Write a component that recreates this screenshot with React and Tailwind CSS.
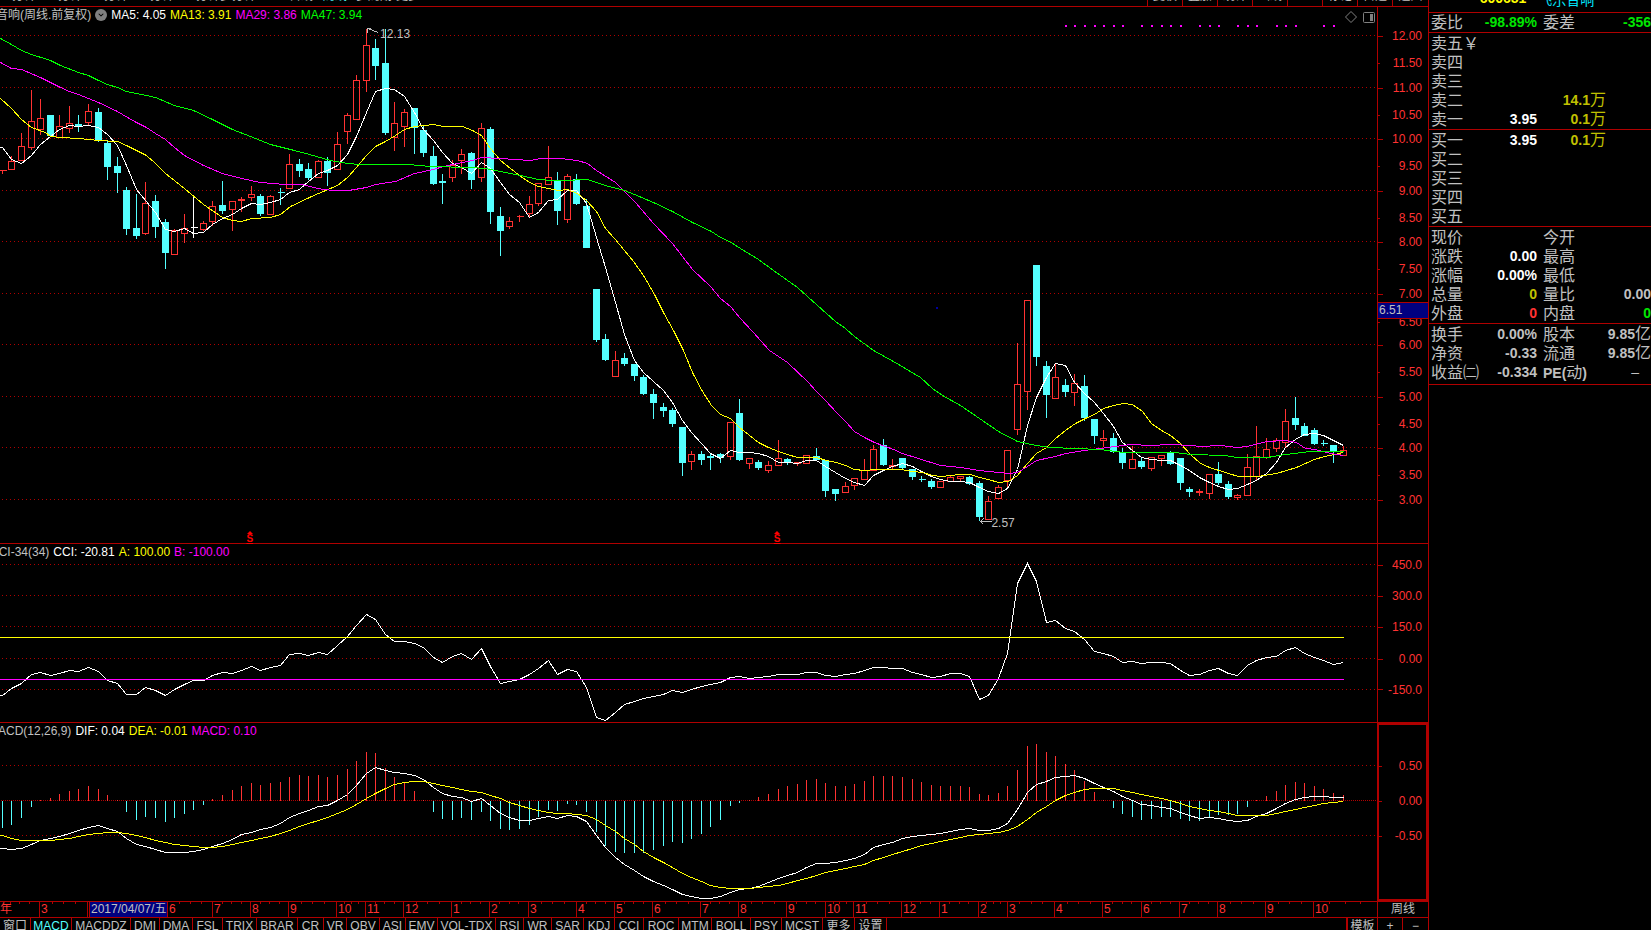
import { HiChevronDown } from "react-icons/hi";

// x of the n-th weekly bar on the 1377 wide canvas
const barX = (i) => Math.floor(2.3 + 9.577 * i);

const GRAY = "#c0c0c0";
const RED = "#ff3232";
const CYAN = "#54ffff";
const LINE = "#b00000";

// [up(1) / down(0) / flat(2), high, body top, body bottom, low]
const candles = [
    [1,170,170,170,173],[1,155,161,169,169],[1,132,146,160,160],[1,89,121,147,149],[1,98,118,129,134],
    [0,114,115,135,135],[1,114,126,137,137],[1,105,123,128,132],[0,114,124,126,131],[1,103,111,122,125],
    [0,107,112,140,141],[0,139,143,166,179],[0,156,166,172,192],[0,186,190,228,234],[0,193,228,235,238],
    [1,181,203,233,234],[0,194,201,226,237],[0,218,222,252,268],[1,228,230,254,254],[1,213,228,233,242],
    [2,194,227,227,237],[1,220,223,229,230],[1,200,206,221,225],[0,180,205,210,213],[1,201,201,209,230],
    [1,196,199,200,211],[1,185,194,197,200],[0,193,196,213,215],[1,194,196,214,214],[0,187,192,192,204],
    [1,153,164,188,188],[0,158,164,170,176],[0,162,169,177,179],[1,159,161,177,177],[0,156,161,172,185],
    [1,131,144,169,169],[1,112,115,131,143],[1,74,80,119,119],[1,28,45,80,91],[0,38,48,65,79],
    [0,28,63,132,134],[1,101,123,137,150],[1,108,112,126,146],[0,108,108,127,153],[0,125,130,152,156],
    [0,145,156,183,184],[0,173,181,182,203],[1,159,165,177,181],[1,148,154,160,173],[0,151,153,179,188],
    [1,122,128,177,181],[0,126,129,211,223],[0,206,216,230,255],[1,216,221,226,228],[1,214,216,216,221],
    [1,195,204,213,216],[1,183,183,203,205],[1,145,177,184,184],[0,171,180,210,224],[1,173,176,219,222],
    [0,173,179,203,204],[0,198,206,247,247],[0,289,289,339,341],[0,333,339,359,360],[1,350,360,376,376],
    [0,352,358,363,365],[0,364,364,375,380],[0,374,377,393,394],[0,388,394,402,418],[0,402,407,410,416],
    [0,407,410,423,426],[0,426,427,462,475],[1,450,454,461,469],[0,450,454,459,464],[0,452,456,457,469],
    [0,452,454,457,462],[1,422,422,456,459],[0,398,413,459,460],[1,458,458,463,468],[0,459,462,467,469],
    [1,460,465,470,472],[1,439,458,465,465],[0,457,459,462,464],[1,461,462,463,465],[1,455,455,463,463],
    [0,447,456,459,459],[0,459,460,490,496],[0,488,489,493,500],[1,481,486,492,492],[1,478,478,485,489],
    [1,458,470,479,479],[1,444,449,470,470],[0,438,445,464,465],[1,458,465,466,469],[0,457,458,467,469],
    [0,468,469,476,479],[0,475,479,479,481],[0,478,481,486,488],[1,481,481,487,487],[1,474,477,481,481],
    [1,475,476,478,480],[0,475,477,483,484],[0,480,483,516,520],[1,495,501,519,519],[1,484,487,498,498],
    [1,450,450,480,487],[1,342,384,429,434],[1,300,300,391,409],[0,265,265,356,365],[0,360,366,394,417],
    [1,362,377,398,398],[0,378,385,391,396],[1,373,383,392,405],[0,374,386,417,420],[0,419,419,435,443],
    [1,429,438,440,446],[0,432,438,451,452],[0,447,452,462,468],[1,445,459,468,468],[0,456,461,466,468],
    [1,456,457,468,470],[1,455,455,458,465],[0,450,452,463,464],[0,457,458,482,489],[0,486,489,491,496],
    [1,488,491,492,495],[1,474,474,493,498],[0,461,474,482,484],[0,480,484,496,498],[1,493,495,497,499],
    [1,453,467,495,495],[1,425,456,476,480],[1,437,449,457,458],[1,437,440,448,451],[1,408,421,442,446],
    [0,396,418,424,429],[0,422,426,435,435],[0,427,430,443,444],[0,439,443,443,445],[0,445,445,451,462],
    [1,445,450,455,455],
];

const ma5 = [
    147,159,163,155,144,136,129,125,126,125,127,134,145,165,189,200,212,229,231,228,233,232,224,218,214,208,203,204,
    202,199,192,189,181,173,170,165,154,136,112,91,88,89,96,112,129,140,152,163,167,173,162,168,182,194,202,217,212,
    200,199,190,190,203,237,267,302,334,360,372,381,390,402,420,432,443,453,458,450,452,452,453,456,462,462,463,460,
    460,466,472,478,482,485,475,470,466,463,466,471,476,479,481,481,482,487,491,493,488,469,425,397,377,363,365,382,
    393,402,413,426,442,450,457,459,460,460,465,470,477,482,486,489,488,484,480,473,462,447,439,434,433,435,440,445,
];

const ma13 =
    "0,98 11,108 21,119 31,127 45,132 50,136 60,137 78,138 98,140 117,141 126,145 146,155 155,163 165,173 184,188 203,204 222,217 232,220 241,221 251,218 270,217 280,214 290,206 309,197 318,193 337,185 347,177 356,167 366,155 375,146 385,141 395,135 404,129 414,126 433,124 443,126 462,126 472,130 481,135 490,148 500,160 510,168 519,175 529,182 538,186 548,188 558,190 567,189 577,193 586,200 596,211 605,228 614,238 624,250 633,261 643,275 654,294 663,312 673,330 683,350 692,372 702,391 711,405 720,414 730,418 739,427 758,442 768,447 778,451 787,454 797,457 816,457 826,460 836,462 845,465 854,469 864,470 875,469 900,469 912,471 922,472 932,475 941,476 950,475 960,474 970,474 979,477 988,479 998,482 1008,481 1017,475 1027,463 1036,453 1046,447 1055,438 1065,430 1075,423 1085,418 1094,414 1103,408 1113,405 1123,403 1132,404 1142,411 1151,423 1161,430 1170,435 1180,443 1190,454 1200,463 1209,467 1228,473 1238,476 1257,476 1276,473 1296,467 1314,459 1324,456 1334,454 1343,452";

const ma29 =
    "0,62 11,68 21,69 40,77 60,87 69,91 78,94 98,102 117,111 127,117 136,122 146,127 155,133 165,139 174,147 184,155 203,165 222,173 241,178 260,182 285,184 302,184 317,188 332,190 348,190 366,187 375,184 395,181 414,173 433,169 443,166 462,162 472,160 481,157 500,158 530,160 540,158 560,158 577,160 587,163 596,170 615,182 635,202 653,223 672,243 692,269 710,286 720,298 730,306 740,318 752,331 769,350 787,362 807,381 816,391 825,400 836,412 845,421 854,431 864,437 874,442 893,449 902,453 921,459 940,465 960,467 979,470 1008,473 1017,472 1027,466 1036,460 1055,456 1065,453 1084,450 1107,447 1130,444 1150,445 1170,444 1190,445 1200,446 1220,445 1237,447 1247,446 1266,441 1285,440 1296,442 1305,448 1315,449 1330,453 1343,455";

const ma47 =
    "0,38 11,44 21,50 31,54 50,60 60,65 78,72 88,75 98,80 107,84 117,87 126,91 146,95 155,97 174,105 193,110 212,119 232,129 250,136 270,144 290,149 309,154 330,160 347,163 360,164 408,164 430,166 470,167 485,168 500,171 520,175 538,179 552,180 570,180 580,179 587,179 605,185 624,190 634,194 653,202 672,211 692,222 711,231 720,237 729,241 740,248 758,259 773,270 797,287 817,305 835,321 845,328 854,336 873,350 893,361 920,377 932,388 942,395 960,405 979,418 998,431 1017,441 1036,445 1050,447 1075,448 1100,449 1123,452 1175,452 1190,454 1225,455 1236,457 1267,457 1285,454 1310,451 1343,451";

const cci = [
    695,688,683,674,672,675,673,670,671,667,671,680,683,694,694,687,690,695,689,684,680,680,675,672,673,670,666,670,
    667,665,654,653,655,652,654,645,636,625,614,619,634,641,641,643,647,657,662,656,653,659,648,666,683,681,679,674,
    668,660,674,669,671,687,717,720,712,704,701,698,696,694,690,692,689,686,684,682,677,676,678,677,676,674,674,674,
    672,672,675,676,674,673,670,667,667,668,668,672,674,677,676,673,673,676,699,695,678,653,583,563,581,622,620,628,
    631,639,651,653,656,662,661,663,662,662,663,670,675,674,670,668,673,675,665,660,657,656,650,647,653,657,660,664,
    662,
];

const macdBars = [
    827,824,817,806,799,797,793,790,788,785,788,794,799,811,819,816,817,821,817,813,809,804,798,794,789,785,782,784,
    782,781,776,774,775,774,776,774,768,760,751,752,767,776,782,790,799,811,818,819,817,819,811,820,828,829,828,824,
    816,809,810,803,804,811,831,845,851,852,852,852,849,845,841,842,838,833,826,819,805,802,799,796,793,788,785,783,
    779,778,782,785,785,783,780,775,775,775,776,778,781,784,785,785,785,786,793,794,792,785,769,745,743,751,755,763,
    769,780,791,799,807,813,816,819,818,816,816,818,820,820,816,814,814,813,806,799,795,790,784,781,782,785,788,792,
    794,
];

const dif = [
    848,849,848,844,840,838,836,833,830,827,825,828,831,838,844,846,849,852,852,852,851,849,846,843,839,834,832,829,
    827,823,817,813,810,806,805,800,794,785,773,767,770,772,773,775,779,787,793,796,797,801,798,805,813,817,820,820,
    818,816,818,815,816,821,835,847,857,864,870,876,881,885,889,894,896,898,898,896,892,889,888,886,882,878,875,872,
    867,863,863,862,860,858,854,847,844,842,838,836,835,834,833,831,829,828,830,830,828,823,809,792,784,781,777,776,
    775,778,783,787,791,796,800,804,805,807,808,812,815,818,817,818,820,821,820,816,813,808,803,799,797,796,796,797,
    797,
];

const dea = [
    835,838,840,840,840,840,839,838,836,834,833,832,832,833,835,837,840,842,844,845,846,847,847,846,844,842,840,838,
    836,833,830,826,823,820,817,813,809,804,798,793,788,784,782,781,781,783,785,787,789,791,792,795,798,802,805,808,
    810,812,813,813,814,815,819,825,831,838,844,851,857,862,867,873,877,881,885,887,888,888,888,887,886,885,883,880,
    878,875,872,870,868,866,864,860,857,854,851,848,845,843,841,839,837,835,834,833,832,830,826,819,812,806,800,795,
    792,789,788,788,788,790,792,794,796,798,800,803,806,808,810,811,813,815,815,815,815,813,811,809,807,805,803,802,
    801,
];

const signalDots = [111,112,113,114,115,116,117,119,120,121,122,123,125,126,127,129,130,131,133,134,135,138,139];

const periods = [
    { name: "1分钟", w: 36 },
    { name: "5分钟", w: 46 },
    { name: "15分钟", w: 46 },
    { name: "30分钟", w: 46 },
    { name: "60分钟", w: 46 },
    { name: "多分钟", w: 33 },
    { name: "日线", w: 60 },
    { name: "周线", w: 34, active: true },
    { name: "多周期", w: 45 },
    { name: "更多", w: 28 },
];

const tools = ["复权", "叠加", "统计", "画线", "F10", "标记", "自选"];

const months = [
    ["年", 39], ["3", 48], ["2017/04/07/五", 80], ["6", 45], ["7", 38], ["8", 38], ["9", 48], ["10", 29], ["11", 38],
    ["12", 48], ["1", 38], ["2", 39], ["3", 48], ["4", 38], ["5", 38], ["6", 48], ["7", 38], ["8", 48], ["9", 39],
    ["10", 28], ["11", 48], ["12", 38], ["1", 39], ["2", 29], ["3", 47], ["4", 48], ["5", 39], ["6", 38], ["7", 38],
    ["8", 48], ["9", 48], ["10", 63],
];

const indicators = [
    ["窗口", 31], ["MACD", 41], ["MACDDZ", 59], ["DMI", 29], ["DMA", 33], ["FSL", 30], ["TRIX", 34], ["BRAR", 41],
    ["CR", 26], ["VR", 23], ["OBV", 33], ["ASI", 26], ["EMV", 32], ["VOL-TDX", 58], ["RSI", 28], ["WR", 28],
    ["SAR", 32], ["KDJ", 31], ["CCI", 29], ["ROC", 35], ["MTM", 33], ["BOLL", 39], ["PSY", 31], ["MCST", 41],
    ["更多", 32], ["设置", 32],
];

const line = (ys) => `-1,${ys[0]} ` + ys.map((y, i) => `${barX(i)},${y}`).join(" ");

function Canvas({ top, height, children }) {
    return (
        <svg className="block w-full h-full" viewBox={`0 ${top} 1377 ${height}`} preserveAspectRatio="none" shapeRendering="crispEdges" fill="none">
            <g transform="translate(0.5 0.5)">{children}</g>
        </svg>
    );
}

function GridLines({ ys }) {
    return ys.map((y) => (
        <path key={y} d={`M1.5 ${y}H1376`} stroke={LINE} strokeDasharray="1 3" />
    ));
}

function Axis({ top, height, ticks, minor = [], boxed = false, children }) {
    return (
        <div className={boxed ? "relative w-[51px] shrink-0 border-2 border-[#b00000] overflow-hidden" : "relative w-[51px] shrink-0 border-l border-[#b00000] overflow-hidden"}>
            <div className={boxed ? "absolute -inset-0.5" : "absolute inset-0"}>
                {ticks.map(([label, y]) => (
                    <div key={label} className="absolute inset-x-0 h-0 flex items-center" style={{ top: `${((y - top + 1) / height) * 100}%` }}>
                        <span className={minor.includes(label) ? "w-0.5 h-px bg-[#b00000]" : "w-[5px] h-px bg-[#b00000]"}></span>
                        <span className="ml-auto pr-1.5 text-[12px] leading-[12px] text-[#ff3232]">{label}</span>
                    </div>
                ))}
                {children}
            </div>
        </div>
    );
}

function Legend({ name, items }) {
    return (
        <div className="absolute left-0 top-0 flex items-center gap-1 h-4 text-[12px] leading-4 whitespace-nowrap">
            {name}
            {items.map(([text, color]) => (
                <span key={text} className={color}>{text}</span>
            ))}
        </div>
    );
}

function Candle({ x, data }) {
    const [kind, high, top, bottom, low] = data;
    const color = kind === 1 ? RED : kind === 0 ? CYAN : "#ffffff";
    return (
        <g stroke={color}>
            {high < top && <path d={`M${x} ${high}V${top}`} />}
            {low > bottom && <path d={`M${x} ${bottom}V${low}`} />}
            {top === bottom
                ? <path d={`M${x - 3} ${top}H${x + 4}`} />
                : <rect x={x - 3} y={top} width="6" height={bottom - top} fill={kind === 0 ? CYAN : "none"} />}
        </g>
    );
}

// dividend / ex-right mark at the foot of the price chart
function ExRightMark({ left }) {
    return (
        <div className="absolute bottom-0 flex flex-col items-center text-[#ff0000]" style={{ left }}>
            <svg width="6" height="3" viewBox="0 0 6 3"><path d="M3 0L6 3H0Z" fill="currentColor" /></svg>
            <span className="font-bold text-[10px] leading-[9px] underline">S</span>
        </div>
    );
}

function PriceChart() {
    const ticks = [
        ["12.00", 35], ["11.50", 62], ["11.00", 87], ["10.50", 114], ["10.00", 138], ["9.50", 165], ["9.00", 190],
        ["8.50", 217], ["8.00", 241], ["7.50", 268], ["7.00", 293], ["6.50", 321], ["6.00", 344], ["5.50", 371],
        ["5.00", 396], ["4.50", 423], ["4.00", 447], ["3.50", 474], ["3.00", 499],
    ];
    return (
        <section className="flex flex-[536] basis-0 min-h-0 border-b border-[#b00000]">
            <div className="relative flex-1 min-w-0">
                <Canvas top={7} height={536}>
                    <GridLines ys={[35, 87, 138, 190, 241, 293, 344, 396, 447, 499]} />
                    {candles.map((c, i) => <Candle key={i} x={barX(i)} data={c} />)}
                    <polyline points={line(ma5)} stroke="#ffffff" />
                    <polyline points={ma13} stroke="#ffff00" />
                    <polyline points={ma29} stroke="#ff00ff" />
                    <polyline points={ma47} stroke="#00ff00" />
                    {signalDots.map((i) => <rect key={i} x={barX(i) - 0.5} y="24.5" width="2" height="2" fill="#ff00ff" />)}
                    <path d="M367 28L378 32M367 28H370M367 28V32" stroke={GRAY} />
                    <path d="M980 521H991M980 521L983 518M980 521L983 524" stroke={GRAY} />
                    <rect x="935.5" y="306.5" width="2" height="2" fill="#0000a0" />
                </Canvas>
                <Legend
                    name={
                        <>
                            <span className="-ml-1 text-[#c0c0c0]">音响(周线.前复权)</span>
                            <button aria-label="指标菜单" className="flex items-center justify-center w-3 h-3 rounded-full bg-[#808080] text-black">
                                <HiChevronDown size={10} />
                            </button>
                        </>
                    }
                    items={[["MA5: 4.05", "text-white"], ["MA13: 3.91", "text-[#ffff00]"], ["MA29: 3.86", "text-[#ff00ff]"], ["MA47: 3.94", "text-[#00ff00]"]]}
                />
                <span className="absolute left-[27.6%] top-[3.9%] text-[12px] leading-3 text-[#c0c0c0]">12.13</span>
                <span className="absolute left-[72%] top-[95.1%] text-[12px] leading-3 text-[#c0c0c0]">2.57</span>
                <ExRightMark left="17.9%" />
                <ExRightMark left="56.2%" />
                <div className="absolute right-0.5 top-1 flex items-center gap-1.5">
                    <button aria-label="标注">
                        <svg width="12" height="12" viewBox="0 0 12 12" fill="none" stroke="#808080"><path d="M6 0.5L11.5 6L6 11.5L0.5 6Z" /></svg>
                    </button>
                    <button aria-label="侧栏">
                        <svg width="12" height="11" viewBox="0 0 12 11" fill="none" stroke="#808080"><rect x="0.5" y="0.5" width="11" height="10" rx="1" /><rect x="7" y="2" width="3" height="7" fill="#808080" stroke="none" /></svg>
                    </button>
                </div>
            </div>
            <Axis top={7} height={536} ticks={ticks} minor={["11.50", "10.50", "9.50", "8.50", "7.50", "6.50", "5.50", "4.50", "3.50"]}>
                <div className="absolute inset-x-0 top-[55%] h-[17px] border-y border-[#b00000] bg-[#000080] pl-px text-[12px] leading-[15px] text-[#c0c0c0]">6.51</div>
            </Axis>
        </section>
    );
}

function CciChart() {
    return (
        <section className="flex flex-[178] basis-0 min-h-0 border-b border-[#b00000]">
            <div className="relative flex-1 min-w-0">
                <Canvas top={544} height={178}>
                    <GridLines ys={[564, 595, 626, 658, 689]} />
                    <polyline points={line(cci)} stroke="#ffffff" />
                    <path d="M-1 637H1343" stroke="#ffff00" />
                    <path d="M-1 679H1343" stroke="#ff00ff" />
                </Canvas>
                <Legend
                    name={<span className="-ml-2.5 text-[#c0c0c0]">CCI-34(34)</span>}
                    items={[["CCI: -20.81", "text-white"], ["A: 100.00", "text-[#ffff00]"], ["B: -100.00", "text-[#ff00ff]"]]}
                />
            </div>
            <Axis top={544} height={178} ticks={[["450.0", 564], ["300.0", 595], ["150.0", 626], ["0.00", 658], ["-150.0", 689]]} />
        </section>
    );
}

function MacdChart() {
    return (
        <section className="flex flex-[178] basis-0 min-h-0 border-b border-[#b00000]">
            <div className="relative flex-1 min-w-0">
                <Canvas top={723} height={178}>
                    <GridLines ys={[765, 835]} />
                    <path d="M0 800H1376" stroke={LINE} strokeDasharray="1 1" />
                    {macdBars.map((y, i) => (
                        <path key={i} d={`M${barX(i)} 800V${y}`} stroke={y < 800 ? RED : CYAN} />
                    ))}
                    <polyline points={line(dif)} stroke="#ffffff" />
                    <polyline points={line(dea)} stroke="#ffff00" />
                </Canvas>
                <Legend
                    name={<span className="-ml-3 text-[#c0c0c0]">MACD(12,26,9)</span>}
                    items={[["DIF: 0.04", "text-white"], ["DEA: -0.01", "text-[#ffff00]"], ["MACD: 0.10", "text-[#ff00ff]"]]}
                />
            </div>
            <Axis top={723} height={178} boxed ticks={[["0.50", 765], ["0.00", 800], ["-0.50", 835]]} />
        </section>
    );
}

function DateAxis() {
    return (
        <div className="flex h-4 shrink-0 border-b border-[#b00000] text-[12px] leading-[15px] text-[#ff3232] whitespace-nowrap">
            <div className="flex flex-1 min-w-0 overflow-hidden">
                {months.map(([label, w], i) =>
                    label.length > 2 ? (
                        <div key={i} className="shrink-0 border-l border-[#b00000] pl-px" style={{ width: `${w / 13.77}%` }}>
                            <div className="h-full overflow-hidden border-l border-[#b00000] bg-[#000080] pl-px text-[#c0c0c0]">{label}</div>
                        </div>
                    ) : (
                        <div key={i} className={i === 0 ? "relative shrink-0" : "relative shrink-0 border-l border-[#b00000] pl-px"} style={{ width: `${w / 13.77}%` }}>
                            {label}
                            <div className="absolute inset-x-0 top-0 h-0.5 grid grid-cols-4">
                                <span></span>
                                <span className="border-l border-[#b00000]"></span>
                                <span className="border-l border-[#b00000]"></span>
                                <span className="border-l border-[#b00000]"></span>
                            </div>
                        </div>
                    )
                )}
            </div>
            <div className="w-[51px] shrink-0 border-l border-[#b00000] text-center text-[#c0c0c0]">周线</div>
        </div>
    );
}

function IndicatorTabs() {
    return (
        <div className="flex h-3 shrink-0 overflow-hidden text-[12px] leading-4 text-[#c0c0c0] whitespace-nowrap">
            <div className="flex flex-1 min-w-0 overflow-hidden">
                {indicators.map(([name, w]) => (
                    <button key={name} className={name === "MACD" ? "shrink-0 h-4 border-r border-[#b00000] text-[#54ffff]" : "shrink-0 h-4 border-r border-[#b00000]"} style={{ width: w }}>
                        {name}
                    </button>
                ))}
            </div>
            <button className="w-[31px] h-4 shrink-0 border-l-2 border-[#b00000]">模板</button>
            <button aria-label="放大" className="w-[25px] h-4 shrink-0 border-l border-[#b00000]">+</button>
            <button aria-label="缩小" className="w-[26px] h-4 shrink-0 border-l border-[#b00000]">−</button>
        </div>
    );
}

function TopBar() {
    return (
        <div className="flex items-end h-[7px] shrink-0 overflow-hidden border-b border-[#b00000] text-[12px] leading-4 text-[#c0c0c0] whitespace-nowrap">
            <div className="flex flex-1 min-w-0">
                {periods.map(({ name, w, active }) => (
                    <button key={name} className={active ? "shrink-0 h-5 text-right text-[#54ffff]" : "shrink-0 h-5 text-right"} style={{ width: w }}>
                        {name}
                    </button>
                ))}
            </div>
            {tools.map((name) => (
                <button key={name} className="w-[35px] h-5 shrink-0 border-l border-[#b00000]">{name}</button>
            ))}
            <button className="w-9 h-5 shrink-0 border-l border-[#b00000]">返回</button>
        </div>
    );
}

function QuoteRow({ label, value, color = "text-[#c0c0c0]", label2, value2, color2 = "text-[#c0c0c0]" }) {
    return (
        <tr className="h-[19px]">
            <th scope="row" className="p-0 pl-0.5 w-[50px] text-left font-normal text-[16px]">{label}</th>
            <td className={`p-0 w-[58px] text-right font-bold ${color}`}>{value}</td>
            <th scope="row" className="p-0 pl-1.5 w-[56px] text-left font-normal text-[16px]">{label2}</th>
            <td className={`p-0 text-right font-bold ${color2}`}>{value2}</td>
        </tr>
    );
}

function Quotes({ rows }) {
    return (
        <table className="w-full table-fixed border-collapse text-[14px] leading-[19px] whitespace-nowrap">
            <tbody>
                {rows.map((row) => <QuoteRow key={row.label} {...row} />)}
            </tbody>
        </table>
    );
}

function Depth({ rows }) {
    return (
        <table className="w-full table-fixed border-collapse text-[14px] leading-[19px] whitespace-nowrap">
            <tbody>
                {rows.map(([label, price, volume]) => (
                    <tr key={label} className="h-[19px]">
                        <th scope="row" className="p-0 pl-0.5 w-[50px] text-left font-normal text-[16px]">{label}</th>
                        <td className="p-0 w-[58px] text-right font-bold text-white">{price}</td>
                        <td className="p-0 w-[69px] text-right font-bold text-[#c0c000]">
                            {volume}{volume && <span className="font-normal text-[16px] leading-none">万</span>}
                        </td>
                        <td></td>
                    </tr>
                ))}
            </tbody>
        </table>
    );
}

function QuotePanel() {
    const yi = <>9.85<span className="font-normal text-[16px] leading-none">亿</span></>;
    const pe = <><span className="font-bold text-[14px] leading-none">PE(</span>动<span className="font-bold text-[14px] leading-none">)</span></>;
    return (
        <aside className="w-[223px] shrink-0 border-l border-[#b00000] text-[#c0c0c0] overflow-hidden">
            <div className="flex items-end justify-center gap-3 h-[13px] pr-1.5 overflow-hidden border-b border-[#b00000] text-[14px] leading-4 whitespace-nowrap">
                <span className="pb-1.5 font-bold text-[#ffff00]">600651</span>
                <span className="pb-1 text-[#00e6ff]">飞乐音响</span>
            </div>
            <div className="border-b border-[#b00000]">
                <Quotes rows={[{ label: "委比", value: "-98.89%", color: "text-[#00e600]", label2: "委差", value2: "-356", color2: "text-[#00e600]" }]} />
            </div>
            <div className="border-b border-[#b00000] pt-px">
                <Depth rows={[["卖五￥"], ["卖四"], ["卖三"], ["卖二", "", "14.1"], ["卖一", "3.95", "0.1"]]} />
            </div>
            <div className="border-b border-[#b00000] pt-px">
                <Depth rows={[["买一", "3.95", "0.1"], ["买二"], ["买三"], ["买四"], ["买五"]]} />
            </div>
            <div className="border-b border-[#b00000] pt-px">
                <Quotes
                    rows={[
                        { label: "现价", label2: "今开" },
                        { label: "涨跌", value: "0.00", color: "text-white", label2: "最高" },
                        { label: "涨幅", value: "0.00%", color: "text-white", label2: "最低" },
                        { label: "总量", value: "0", color: "text-[#c0c000]", label2: "量比", value2: "0.00" },
                        { label: "外盘", value: "0", color: "text-[#ff3232]", label2: "内盘", value2: "0", color2: "text-[#00e600]" },
                    ]}
                />
            </div>
            <div className="border-b border-[#b00000] pt-px pb-0.5">
                <Quotes
                    rows={[
                        { label: "换手", value: "0.00%", label2: "股本", value2: yi },
                        { label: "净资", value: "-0.33", label2: "流通", value2: yi },
                        { label: "收益㈡", value: "-0.334", label2: pe, value2: <span className="pr-3 font-normal">–</span> },
                    ]}
                />
            </div>
        </aside>
    );
}

export default function App() {
    return (
        <div className="flex h-screen overflow-hidden bg-black font-['Liberation_Sans','Noto_Sans_CJK_SC',sans-serif]">
            <main className="flex flex-1 flex-col min-w-0">
                <TopBar />
                <PriceChart />
                <CciChart />
                <MacdChart />
                <DateAxis />
                <IndicatorTabs />
            </main>
            <QuotePanel />
        </div>
    );
}
